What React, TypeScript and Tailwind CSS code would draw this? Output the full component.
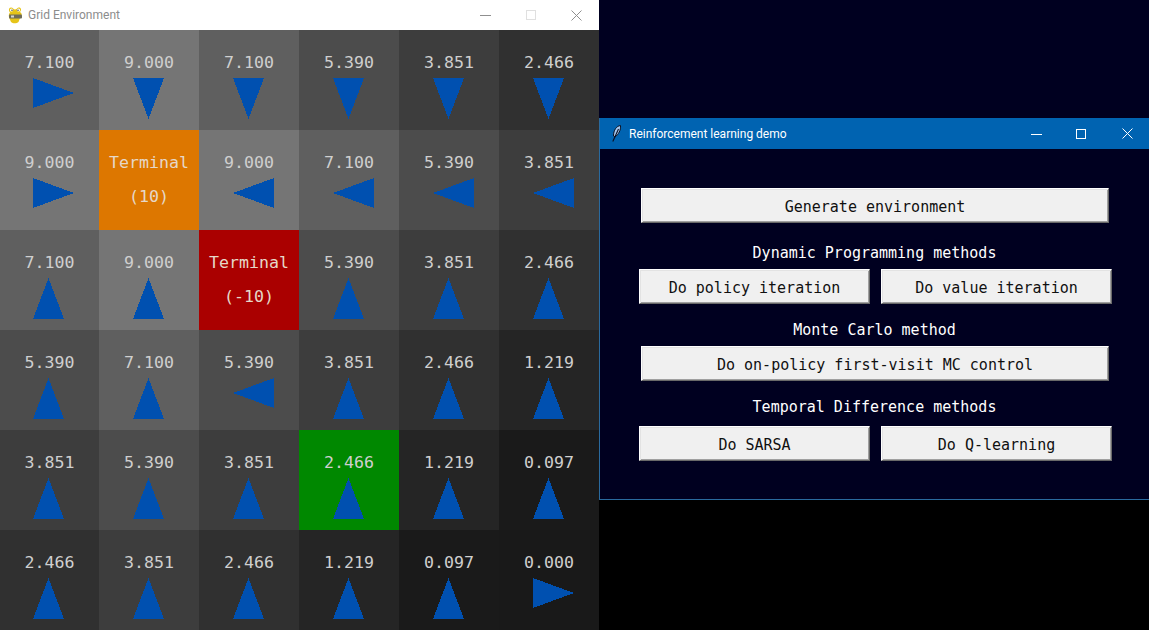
type Dir = 'U' | 'D' | 'L' | 'R';

interface Cell {
  value?: string;
  dir?: Dir;
  terminal?: string;
  bg: string;
}

const shade: Record<string, string> = {
  '9.000': 'bg-[#757575]',
  '7.100': 'bg-[#5f5f5f]',
  '5.390': 'bg-[#4c4c4c]',
  '3.851': 'bg-[#3d3d3d]',
  '2.466': 'bg-[#303030]',
  '1.219': 'bg-[#252525]',
  '0.097': 'bg-[#1a1a1a]',
  '0.000': 'bg-[#191919]',
};

const v = (value: string, dir: Dir, bg?: string): Cell => ({ value, dir, bg: bg ?? shade[value] });

const rows: Cell[][] = [
  [v('7.100', 'R'), v('9.000', 'D'), v('7.100', 'D'), v('5.390', 'D'), v('3.851', 'D'), v('2.466', 'D')],
  [v('9.000', 'R'), { terminal: '(10)', bg: 'bg-[#dd7700]' }, v('9.000', 'L'), v('7.100', 'L'), v('5.390', 'L'), v('3.851', 'L')],
  [v('7.100', 'U'), v('9.000', 'U'), { terminal: '(-10)', bg: 'bg-[#aa0000]' }, v('5.390', 'U'), v('3.851', 'U'), v('2.466', 'U')],
  [v('5.390', 'U'), v('7.100', 'U'), v('5.390', 'L'), v('3.851', 'U'), v('2.466', 'U'), v('1.219', 'U')],
  [v('3.851', 'U'), v('5.390', 'U'), v('3.851', 'U'), v('2.466', 'U', 'bg-[#008800]'), v('1.219', 'U'), v('0.097', 'U')],
  [v('2.466', 'U'), v('3.851', 'U'), v('2.466', 'U'), v('1.219', 'U'), v('0.097', 'U'), v('0.000', 'R')],
];

const arrowPoints: Record<Dir, string> = {
  U: '0,41 31,41 15.5,0',
  D: '0,0 31,0 15.5,41',
  R: '0,0 41,15 0,30',
  L: '41,0 0,15 41,30',
};

function Arrow({ dir }: { dir: Dir }) {
  return (
    <svg width="41" height="41" viewBox="0 0 41 41" className="ml-2 shrink-0" shapeRendering="crispEdges">
      <polygon points={arrowPoints[dir]} fill="#0050b0" />
    </svg>
  );
}

function GridCell({ cell }: { cell: Cell }) {
  return (
    <div className={`flex flex-col items-center pt-[22px] ${cell.bg}`}>
      {cell.terminal ? (
        <>
          <span className="h-[22px] text-[16.6px] leading-[22px] text-[#e6d8c8]">Terminal</span>
          <span className="mt-3 h-[22px] text-[16.6px] leading-[22px] text-[#e6d8c8]">{cell.terminal}</span>
        </>
      ) : (
        <>
          <span className="mb-1 h-[22px] text-[16.6px] leading-[22px] text-[#cfcfcf]">{cell.value}</span>
          <Arrow dir={cell.dir as Dir} />
        </>
      )}
    </div>
  );
}

function PygameIcon() {
  return (
    <svg width="15" height="17" viewBox="0 0 15 17" className="shrink-0">
      <path d="M3 0.5 C0.5 0.5 0.5 4 2 5.5 C0.5 6.5 0.5 10 1.5 11.5 L3 15 C5 17 9 16.5 10.5 15 L12 11 C14 9.5 14.5 6.5 12 5 C14 3 13 0 10.5 0.5 C9 1 8.5 2.5 7 2.5 C5.5 2.5 5 0.5 3 0.5 Z" fill="#e6c419" />
      <rect x="1" y="7.5" width="13" height="4" rx="1" fill="#6f6c58" />
      <rect x="3" y="8.5" width="3" height="2" fill="#d8d8d0" />
      <circle cx="3.5" cy="3" r="1.6" fill="#fff" />
      <circle cx="10.5" cy="3" r="1.6" fill="#fff" />
      <circle cx="4" cy="3.2" r="0.7" fill="#333" />
      <circle cx="10" cy="3.2" r="0.7" fill="#333" />
    </svg>
  );
}

function FeatherIcon() {
  return (
    <svg width="10" height="17" viewBox="0 0 10 17" className="shrink-0">
      <path d="M8.5 0.5 C4.5 1 1.5 5 1.5 11 L3 12 C6.5 9.5 9 5 8.5 0.5 Z" fill="#a6c8f0" stroke="#0b1020" strokeWidth="1" />
      <path d="M6.5 4 L0.8 16.5" stroke="#0b1020" strokeWidth="1.1" fill="none" />
    </svg>
  );
}

function WindowControls({ color, maxColor, minWidth, maxWidth }: { color: string; maxColor: string; minWidth: number; maxWidth: number }) {
  return (
    <div className="ml-auto flex h-full items-center">
      <svg width={minWidth} height="12" className="shrink-0">
        <path d="M0 6.5 H11" stroke={color} />
      </svg>
      <svg width={maxWidth} height="10" className="shrink-0">
        <rect x="0.5" y="0.5" width="9" height="9" fill="none" stroke={maxColor} />
      </svg>
      <svg width="11" height="11" viewBox="0 0 11 11" className="shrink-0">
        <path d="M0.5 0.5 L10.5 10.5 M10.5 0.5 L0.5 10.5" stroke={color} />
      </svg>
    </div>
  );
}

function TkButton({ label, className }: { label: string; className: string }) {
  return (
    <button
      className={`${className} flex h-[35px] items-center justify-center border border-t-white border-l-white border-r-[#696969] border-b-[#696969] bg-[#f0f0f0] pt-1 text-[15px] text-[#101010] shadow-[inset_1px_1px_0_#e3e3e3,inset_-1px_-1px_0_#a0a0a0]`}
    >
      {label}
    </button>
  );
}

function SectionLabel({ label }: { label: string }) {
  return <div className="h-[20px] pt-px text-center text-[15px] leading-[20px] text-white">{label}</div>;
}

export default function App() {
  return (
    <div className="flex h-[630px] w-[1149px] overflow-hidden bg-black font-['DejaVu_Sans_Mono',monospace]">
      {/* Pygame window */}
      <div className="flex w-[599px] shrink-0 flex-col">
        <div className="flex h-[30px] items-center bg-white pr-[17px] pl-2 font-['Roboto',sans-serif]">
          <PygameIcon />
          <span className="ml-[5px] text-xs text-[#8c8c8c]">Grid Environment</span>
          <WindowControls color="#8f8f8f" maxColor="#e0e0e0" minWidth={46} maxWidth={45} />
        </div>
        <div className="grid flex-1 grid-cols-[99px_repeat(5,100px)] grid-rows-[repeat(6,100px)]">
          {rows.flat().map((cell, i) => (
            <GridCell key={i} cell={cell} />
          ))}
        </div>
      </div>

      {/* Tk window */}
      <div className="flex flex-1 flex-col">
        <div className="h-[118px] bg-[#000020]" />
        <div className="flex h-[382px] flex-col border-b border-l border-[#2a6a9e] bg-[#000020]">
          <div className="flex h-[31px] shrink-0 items-center bg-[#0063b1] pr-4 pl-3 font-['Roboto',sans-serif]">
            <FeatherIcon />
            <span className="ml-[7px] text-xs text-white">Reinforcement learning demo</span>
            <WindowControls color="#ffffff" maxColor="#ffffff" minWidth={45} maxWidth={46} />
          </div>
          <div className="flex flex-1 flex-col items-center pt-[39px]">
            <TkButton label="Generate environment" className="w-[468px] pl-px" />
            <div className="mt-[19px]">
              <SectionLabel label="Dynamic Programming methods" />
            </div>
            <div className="mt-[7px] ml-[2px] flex gap-[11px]">
              <TkButton label="Do policy iteration" className="w-[231px]" />
              <TkButton label="Do value iteration" className="w-[231px]" />
            </div>
            <div className="mt-[15px]">
              <SectionLabel label="Monte Carlo method" />
            </div>
            <div className="mt-[7px]">
              <TkButton label="Do on-policy first-visit MC control" className="w-[468px] pl-px" />
            </div>
            <div className="mt-[15px]">
              <SectionLabel label="Temporal Difference methods" />
            </div>
            <div className="mt-[10px] ml-[2px] flex gap-[11px]">
              <TkButton label="Do SARSA" className="w-[231px]" />
              <TkButton label="Do Q-learning" className="w-[231px]" />
            </div>
          </div>
        </div>
      </div>
    </div>
  );
}
